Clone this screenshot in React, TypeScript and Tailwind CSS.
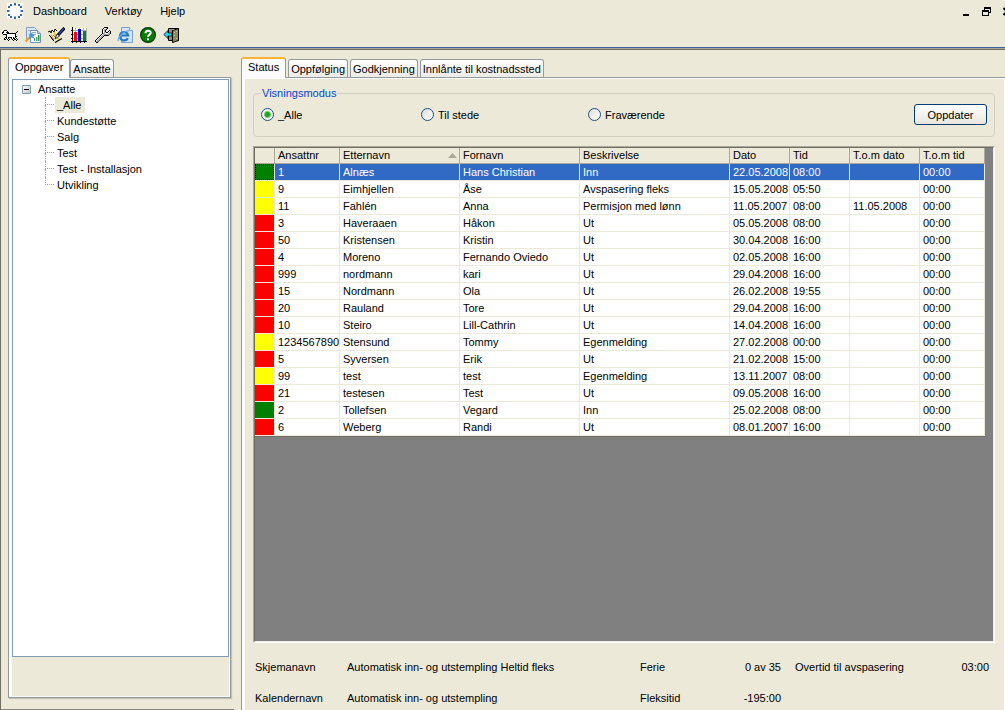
import clsx from "clsx";
import { useState, type ReactNode } from "react";

type StatusColor = "green" | "yellow" | "red";

type Employee = {
  color: StatusColor;
  cells: [string, string, string, string, string, string, string, string];
};

const employees: Employee[] = [
  { color: "green", cells: ["1", "Alnæs", "Hans Christian", "Inn", "22.05.2008", "08:00", "", "00:00"] },
  { color: "yellow", cells: ["9", "Eimhjellen", "Åse", "Avspasering fleks", "15.05.2008", "05:50", "", "00:00"] },
  { color: "yellow", cells: ["11", "Fahlén", "Anna", "Permisjon med lønn", "11.05.2007", "08:00", "11.05.2008", "00:00"] },
  { color: "red", cells: ["3", "Haveraaen", "Håkon", "Ut", "05.05.2008", "08:00", "", "00:00"] },
  { color: "red", cells: ["50", "Kristensen", "Kristin", "Ut", "30.04.2008", "16:00", "", "00:00"] },
  { color: "red", cells: ["4", "Moreno", "Fernando Oviedo", "Ut", "02.05.2008", "16:00", "", "00:00"] },
  { color: "red", cells: ["999", "nordmann", "kari", "Ut", "29.04.2008", "16:00", "", "00:00"] },
  { color: "red", cells: ["15", "Nordmann", "Ola", "Ut", "26.02.2008", "19:55", "", "00:00"] },
  { color: "red", cells: ["20", "Rauland", "Tore", "Ut", "29.04.2008", "16:00", "", "00:00"] },
  { color: "red", cells: ["10", "Steiro", "Lill-Cathrin", "Ut", "14.04.2008", "16:00", "", "00:00"] },
  { color: "yellow", cells: ["1234567890", "Stensund", "Tommy", "Egenmelding", "27.02.2008", "00:00", "", "00:00"] },
  { color: "red", cells: ["5", "Syversen", "Erik", "Ut", "21.02.2008", "15:00", "", "00:00"] },
  { color: "yellow", cells: ["99", "test", "test", "Egenmelding", "13.11.2007", "08:00", "", "00:00"] },
  { color: "red", cells: ["21", "testesen", "Test", "Ut", "09.05.2008", "16:00", "", "00:00"] },
  { color: "green", cells: ["2", "Tollefsen", "Vegard", "Inn", "25.02.2008", "08:00", "", "00:00"] },
  { color: "red", cells: ["6", "Weberg", "Randi", "Ut", "08.01.2007", "16:00", "", "00:00"] },
];

const columns = [
  { title: "Ansattnr", width: "w-[65px]" },
  { title: "Etternavn", width: "w-[120px]" },
  { title: "Fornavn", width: "w-[120px]" },
  { title: "Beskrivelse", width: "w-[150px]" },
  { title: "Dato", width: "w-[60px]" },
  { title: "Tid", width: "w-[60px]" },
  { title: "T.o.m dato", width: "w-[70px]" },
  { title: "T.o.m tid", width: "w-[65px]" },
];

const statusColors: Record<StatusColor, string> = {
  green: "bg-[#008000]",
  yellow: "bg-[#ffff00]",
  red: "bg-[#ff0000]",
};

const groups = ["_Alle", "Kundestøtte", "Salg", "Test", "Test - Installasjon", "Utvikling"];

const palette: Record<string, string> = {
  "#": "#000000",
  d: "#4a4a4a",
  g: "#a8a8a8",
  w: "#ffffff",
  b: "#3468a8",
  l: "#9ab8dc",
};

// One character is one pixel, a dot is transparent
const PixelIcon = ({ rows }: { rows: string[] }) => (
  <svg width={17} height={16} viewBox="0 0 17 16" shapeRendering="crispEdges" aria-hidden="true">
    {rows.flatMap((row, y) =>
      [...row].map((char, x) =>
        char === "." ? null : (
          <rect key={`${x}-${y}`} x={x} y={y} width={1} height={1} fill={palette[char]} />
        ),
      ),
    )}
  </svg>
);

const dogRows = [
  "",
  "",
  "",
  "..###............",
  ".#www#.........#.",
  "##wwd##.......#..",
  "#wwww#########w..",
  ".####wwwwwwww#...",
  "....#wwwwwwww#...",
  "....#wwwwwwww##..",
  "...##w####w#w#...",
  "..#w#w#..#w##w#..",
  "..##.#w#..#w##w#.",
  "......#....#..#..",
];

const wrenchRows = [
  "..........####...",
  ".........#wwg#...",
  "........#wgg#....",
  "........#wg#...#.",
  "........#wg#..#w#",
  "........#wgg##wg#",
  "........#ggwwwgg#",
  ".......#wggggggd.",
  "......#wgg####d..",
  ".....#wgg#.......",
  "....#wgg#........",
  "...#wgg#.........",
  "..#wgg#..........",
  ".#wggd...........",
  ".#ggd............",
  "..##.............",
];

const logoRows = [
  "wwwwwwwbbwwwwwww",
  "wwwbbwwbbwwbbwww",
  "wwwbbwwllwwbbwww",
  "wbbwwwwwwwwwwbbw",
  "wbbwwwwwwwwwwbbw",
  "wwwwwwwwwwwwwwww",
  "wwwwwwwwwwwwwwww",
  "bblwwwwwwwwwwlbb",
  "bblwwwwwwwwwwlbb",
  "wwwwwwwwwwwwwwww",
  "wwwwwwwwwwwwwwww",
  "wbbwwwwwwwwwwbbw",
  "wbbwwwwwwwwwwbbw",
  "wwwbbwwllwwbbwww",
  "wwwbbwwbbwwbbwww",
  "wwwwwwwbbwwwwwww",
];

const ReportIcon = () => (
  <svg width={16} height={16} viewBox="0 0 16 16" aria-hidden="true">
    <path d="M1.500.5h8l2 2v9h-10z" fill="#d9e7f7" stroke="#7c9cc4" />
    <path d="M3 3.500h5" stroke="#8eb0d8" />
    <path d="M5.500 3.500h7l3 3v9h-10z" fill="#fff" stroke="#6d91bd" />
    <path d="M12.500 3.500v3h3" fill="#c8dcf2" stroke="#6d91bd" />
    <path d="M7 5.500h4M8 7.500h3" stroke="#8eb0d8" />
    <path d="M9 11h1v3H9z" fill="#3a8ad0" />
    <path d="M11 10h1.500v4H11z" fill="#4db848" />
    <path d="M13 8h1.500v6H13z" fill="#2e9c3c" />
    <path d="m.5 14.500 5-5" stroke="#e0a02c" strokeWidth={2} />
    <path d="m7 5 .8 2.200 2.200.3-1.500 1.700.5 2.300-2.200-1-2.300 1 .4-2.300L3.300 7.500l2.500-.3z" fill="#4c94dc" />
  </svg>
);

const BrushIcon = () => (
  <svg width={17} height={16} viewBox="0 0 17 16" aria-hidden="true">
    <path d="m1 6 7-2 5 6-6 5z" fill="#f7f2d6" />
    <path d="m3 7 3 6M6 5l2 5M9 11l2 1" stroke="#d9b93a" strokeWidth={1.500} />
    <path d="m5 8 3 3M3 10l3 3" stroke="#8f8760" />
    <path d="m0 5 2-1 1 2 1-3 2 2 1-3 2 2M1 8l2 2 1 2 2 2" stroke="#000" fill="none" />
    <path d="m7 15.500 7-4" stroke="#000" strokeWidth={1.200} />
    <path d="M16.500 1 10 8" stroke="#000" strokeWidth={3} />
    <path d="m16 1.500-5.500 6" stroke="#2746c8" strokeWidth={1.200} />
    <path d="m9 7-2 5 4.500-3z" fill="#fff" stroke="#000" strokeWidth={0.800} />
  </svg>
);

const ChartIcon = () => (
  <svg width={17} height={16} viewBox="0 0 17 16" shapeRendering="crispEdges" aria-hidden="true">
    <path d="M1 1h15v13H1z" fill="#fff" />
    <path d="M1 3.500h15M1 7.500h15M1 11.500h15M4.500 1v13M8.500 1v13M12.500 1v13M15.500 1v13" stroke="#b0b0b0" />
    <path d="M3 5h3v9H3z" fill="#ff0000" />
    <path d="M7 2h3v12H7z" fill="#0000d8" />
    <path d="M12 4h3v10h-3z" fill="#008040" />
    <path d="M1.500 0v16M0 14.500h16M0 3.500h1M0 7.500h1M0 11.500h1M5.500 14v2M9.500 14v2M13.500 14v2" stroke="#000" />
  </svg>
);

const BrowserIcon = () => (
  <svg width={17} height={16} viewBox="0 0 17 16" aria-hidden="true">
    <path d="M4.500.5h8l3 3v12h-11z" fill="#d3e3f8" stroke="#7f9fce" />
    <path d="M12.500.5v3h3" fill="#fff" stroke="#7f9fce" />
    <path
      d="M10.800 11.200A4.200 4.200 0 1 1 11.200 8.500H3.500"
      fill="none"
      stroke="#2477c4"
      strokeWidth={2.200}
    />
    <path d="M1.500 14C-.5 11 8 3 12.500 4" fill="none" stroke="#67aee8" strokeWidth={1.200} />
  </svg>
);

const HelpIcon = () => (
  <svg width={16} height={16} viewBox="0 0 16 16" aria-hidden="true">
    <circle cx={8} cy={8} r={7.400} fill="#087b08" stroke="#003c00" strokeWidth={1.200} />
    <path d="M5.500 6.200c0-3.400 5.200-3.200 5.200-.4C10.700 7.600 8 7.700 8 10" fill="none" stroke="#fff" strokeWidth={2} />
    <path d="M7 11.200h2v2H7z" fill="#fff" />
  </svg>
);

const ExitIcon = () => (
  <svg width={17} height={16} viewBox="0 0 17 16" aria-hidden="true">
    <path d="M5.500 1.500h10v12h-10z" fill="#ece9d8" stroke="#000" />
    <path d="M6 2h4v11H6z" fill="#8a8a8a" />
    <path d="m9.500 3.500 6-2v12l-6 2z" fill="#8c8a54" stroke="#000" />
    <path d="M11 5.500h1M13 4.500h1M11 8.500h1M13 11.500h1" stroke="#c9c796" />
    <path d="M.8 7.500 5 3.500V6h4v3H5v2.500z" fill="#19d4e4" stroke="#000" strokeWidth={0.700} />
  </svg>
);

const tools: { label: string; icon: ReactNode }[] = [
  { label: "Hund", icon: <PixelIcon rows={dogRows} /> },
  { label: "Rapport", icon: <ReportIcon /> },
  { label: "Rediger", icon: <BrushIcon /> },
  { label: "Statistikk", icon: <ChartIcon /> },
  { label: "Innstillinger", icon: <PixelIcon rows={wrenchRows} /> },
  { label: "Nettleser", icon: <BrowserIcon /> },
  { label: "Hjelp", icon: <HelpIcon /> },
  { label: "Avslutt", icon: <ExitIcon /> },
];

const Header = () => (
  <header className="shrink-0 border-b border-[#aca899]">
    <div className="border-b border-[#3d62a0]">
      <div className="flex h-[22px] items-center overflow-hidden pl-[7px]">
        <PixelIcon rows={logoRows} />
        <nav className="ml-[9px] flex gap-[18px]">
          <button type="button">Dashboard</button>
          <button type="button">Verktøy</button>
          <button type="button">Hjelp</button>
        </nav>
        <div className="-mr-[6px] ml-auto flex gap-3">
          <button type="button" aria-label="Minimer">
            <svg width={8} height={9} viewBox="0 0 8 9" shapeRendering="crispEdges" aria-hidden="true">
              <path d="M1 7h6v2H1z" />
            </svg>
          </button>
          <button type="button" aria-label="Gjenopprett">
            <svg width={9} height={9} viewBox="0 0 9 9" shapeRendering="crispEdges" aria-hidden="true">
              <path d="M2 0h7v6H7V5h1V2H3v1H2zM0 3h7v6H0zM1 5v3h5V5z" fillRule="evenodd" />
            </svg>
          </button>
          <button type="button" aria-label="Lukk">
            <svg width={8} height={9} viewBox="0 0 8 9" aria-hidden="true">
              <path d="m.5 1 7 7m0-7-7 7" stroke="#000" strokeWidth={2} />
            </svg>
          </button>
        </div>
      </div>
      <div className="flex h-[25px] items-center gap-[7px] pl-[2px]">
        {tools.map(({ label, icon }) => (
          <button key={label} type="button" aria-label={label} className="w-4">
            {icon}
          </button>
        ))}
      </div>
    </div>
  </header>
);

type TabsProps = {
  items: string[];
  label: string;
  gap?: string;
};

const Tabs = ({ items, label, gap }: TabsProps) => {
  const [active, setActive] = useState(items[0]);

  return (
    <div role="tablist" aria-label={label} className={clsx("flex h-5 shrink-0 items-end", gap)}>
      {items.map((item) => (
        <button
          key={item}
          type="button"
          role="tab"
          aria-selected={item === active}
          onClick={() => setActive(item)}
          className={clsx(
            "rounded-t-[3px] border-x border-[#919b9c] whitespace-nowrap",
            item === active
              ? "relative -mb-px h-[21px] border-t-2 border-t-[#f9b233] bg-[#fcfcfe] px-[6px] pb-1"
              : "h-[18px] border-t bg-linear-to-b from-white to-[#ecebe6] px-[2px]",
          )}
        >
          {item}
        </button>
      ))}
    </div>
  );
};

const Tree = () => {
  const [selected, setSelected] = useState("_Alle");

  return (
    <div className="flex-1 border border-[#7f9db9] bg-white pt-px pl-[9px]">
      <div className="flex h-4 items-center gap-[7px]">
        <button
          type="button"
          aria-label="Skjul gruppe"
          className="flex size-[9px] items-center justify-center rounded-[1px] border border-[#7898b5] bg-linear-to-br from-white to-[#c9c4b4]"
        >
          <span className="h-px w-[5px] bg-black" />
        </button>
        <span>Ansatte</span>
      </div>
      <ul className="pl-[23px]">
        {groups.map((group, index) => (
          <li key={group} className="flex h-4">
            <span className="flex w-[9px] flex-col">
              <span className="h-2 border-b border-l border-dotted border-[#a0a0a0]" />
              {index < groups.length - 1 && (
                <span className="h-2 border-l border-dotted border-[#a0a0a0]" />
              )}
            </span>
            <button
              type="button"
              onClick={() => setSelected(group)}
              className={clsx("ml-px pr-1 pl-[2px]", group === selected && "bg-[#ece9d8]")}
            >
              {group}
            </button>
          </li>
        ))}
      </ul>
    </div>
  );
};

const Sidebar = () => (
  <aside className="flex w-[233px] shrink-0 flex-col border-b border-[#8a887c] pt-[7px] pr-[3px] pb-[11px] pl-[7px]">
    <Tabs items={["Oppgaver", "Ansatte"]} label="Oversikt" />
    <div className="flex flex-1 flex-col border border-[#919b9c] shadow-[1px_1px_1px_#c5c2b2]">
      <div className="flex flex-1 flex-col border border-l-3 border-[#fcfcfe] pb-[39px]">
        <Tree />
      </div>
    </div>
  </aside>
);

const modes = [
  { label: "_Alle", width: "w-[160px]" },
  { label: "Til stede", width: "w-[167px]" },
  { label: "Fraværende", width: "w-[160px]" },
];

const ViewMode = () => {
  const [mode, setMode] = useState("_Alle");

  return (
    <fieldset className="h-[50px] shrink-0 rounded-[4px] border border-[#d0d0bf] px-[7px]">
      <legend className="px-px leading-[13px] text-[#0046d5]">Visningsmodus</legend>
      <div className="flex h-[29px] items-center">
        {modes.map(({ label, width }) => (
          <label key={label} className={clsx("flex items-center gap-1", width)}>
            <input
              type="radio"
              name="mode"
              checked={mode === label}
              onChange={() => setMode(label)}
              className="size-[13px] appearance-none rounded-full border border-[#1c5180] bg-linear-to-br from-[#dcdcd7] to-white checked:bg-[radial-gradient(circle,#21a121_0_2px,#6ccb6c_3px,#f6f6f4_4px)]"
            />
            {label}
          </label>
        ))}
        <button
          type="button"
          className="ml-auto h-[21px] w-[73px] rounded-[3px] border border-[#003c74] bg-linear-to-b from-white to-[#e8e6dc]"
        >
          Oppdater
        </button>
      </div>
    </fieldset>
  );
};

const EmployeeTable = () => {
  const [selected, setSelected] = useState(0);

  return (
    <div className="mt-[9px] flex min-h-0 flex-1 flex-col border border-t-[#aca899] border-r-white border-b-white border-l-[#aca899]">
      <div className="flex-1 overflow-hidden border border-t-[#716f64] border-r-[#f1efe2] border-b-[#f1efe2] border-l-[#716f64] bg-[#808080]">
        <table className="w-[730px] table-fixed border-separate border-spacing-0 bg-white text-left leading-4">
          <thead>
            <tr className="bg-[#ece9d8]">
              <th aria-label="Status" className="w-5 border-r border-b border-[#aca899]" />
              {columns.map(({ title, width }) => (
                <th
                  key={title}
                  className={clsx("h-4 border-r border-b border-[#aca899] p-0 pl-[3px] leading-[15px] font-normal", width)}
                >
                  <span className="flex items-center justify-between pr-[2px] whitespace-nowrap">
                    {title}
                    {title === "Etternavn" && (
                      <svg width={9} height={5} viewBox="0 0 9 5" aria-hidden="true">
                        <path d="M4.500 0 9 5H0z" fill="#aca899" />
                      </svg>
                    )}
                  </span>
                </th>
              ))}
            </tr>
          </thead>
          <tbody>
            {employees.map(({ color, cells }, index) => (
              <tr
                key={cells[0]}
                onClick={() => setSelected(index)}
                className={clsx(index === selected && "bg-[#316ac5] text-white")}
              >
                <td className={clsx("border-r border-b border-[#ece9d8] p-0", statusColors[color])}>
                  {index === selected && <div className="h-4 border border-dotted border-black" />}
                </td>
                {cells.map((cell, cellIndex) => (
                  <td
                    key={columns[cellIndex].title}
                    className="h-[17px] border-r border-b border-[#ece9d8] p-0 pl-[3px] whitespace-nowrap"
                  >
                    {cell}
                  </td>
                ))}
              </tr>
            ))}
          </tbody>
        </table>
        <div className="h-px w-[730px] bg-[#716f64]" />
      </div>
    </div>
  );
};

const Summary = () => (
  <dl className="grid shrink-0 grid-cols-[92px_293px_80px_61px_14px_1fr_auto] gap-y-[15px] pt-4 pr-[6px] pb-1 pl-[2px] leading-4 whitespace-nowrap">
    <dt>Skjemanavn</dt>
    <dd>Automatisk inn- og utstempling Heltid fleks</dd>
    <dt>Ferie</dt>
    <dd className="text-right">0 av 35</dd>
    <dt className="col-start-6">Overtid til avspasering</dt>
    <dd>03:00</dd>
    <dt>Kalendernavn</dt>
    <dd>Automatisk inn- og utstempling</dd>
    <dt>Fleksitid</dt>
    <dd className="text-right">-195:00</dd>
  </dl>
);

const App = () => (
  <div className="flex h-screen flex-col overflow-hidden bg-[#ece9d8] font-['Liberation_Sans',Arial,sans-serif] text-[11px] leading-4 text-black">
    <Header />
    <div className="flex min-h-0 flex-1 border-t border-l border-[#716f64]">
      <Sidebar />
      <main className="ml-[7px] flex min-w-0 flex-1 flex-col pt-[7px]">
        <Tabs
          items={["Status", "Oppfølging", "Godkjenning", "Innlånte til kostnadssted"]}
          label="Ansattstatus"
          gap="gap-[2px]"
        />
        <div className="flex min-h-0 flex-1 flex-col border-t border-l border-[#919b9c]">
          <div className="flex min-h-0 flex-1 flex-col border-t border-r border-l-3 border-[#fcfcfe] pt-2 pr-[9px] pl-2">
            <ViewMode />
            <EmployeeTable />
            <Summary />
          </div>
        </div>
      </main>
    </div>
  </div>
);

export default App;
